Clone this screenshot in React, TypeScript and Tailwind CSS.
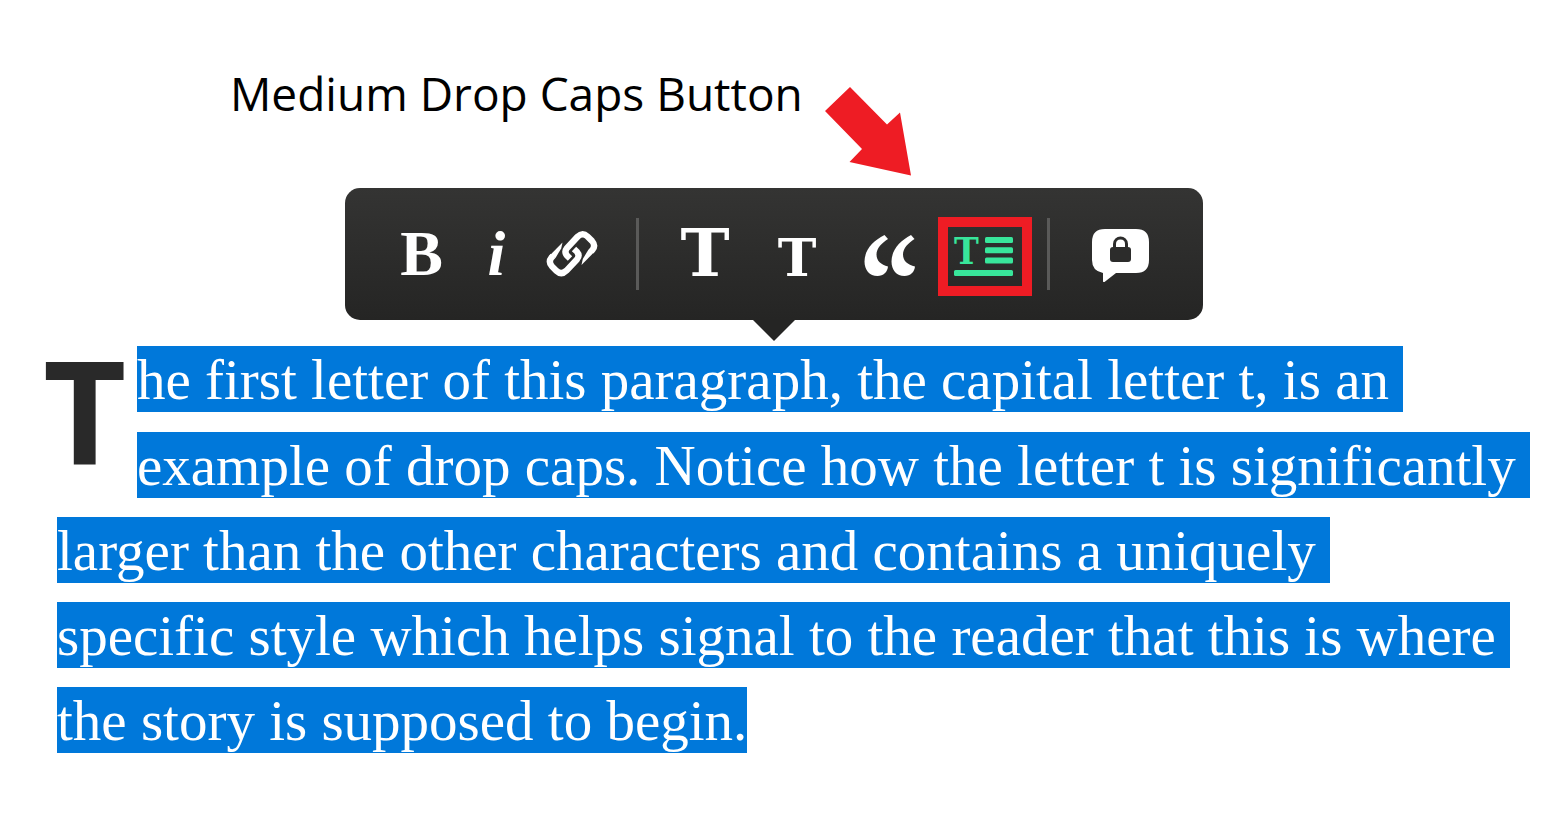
import type { ReactNode } from 'react';

const besideCap = [
  'he first letter of this paragraph, the capital letter t, is an ',
  'example of drop caps. Notice how the letter t is significantly ',
];

const belowCap = [
  'larger than the other characters and contains a uniquely ',
  'specific style which helps signal to the reader that this is where ',
  'the story is supposed to begin.',
];

function Tool({ label, className, children }: { label: string; className: string; children: ReactNode }) {
  return (
    <button type="button" aria-label={label} className={`flex shrink-0 justify-center ${className}`}>
      {children}
    </button>
  );
}

function Divider() {
  return <span className="h-[72px] w-[3px] shrink-0 bg-[#5a5a59]" />;
}

function ChainLink() {
  return (
    <>
      <path
        d="M24 27.500 L21.200 24.800 Q17.800 21 21 17 L31.500 5.800 Q36.500 0.800 41.500 5.500 L46 10 Q50 14.500 46.500 18.800 L45 20.500"
        fill="none"
        stroke="#fff"
        strokeWidth="6.300"
      />
      <path d="M35.500 34 L36.800 28 L42.500 18.500 L48.800 20.500 Z" fill="#fff" />
    </>
  );
}

function LinkIcon() {
  return (
    <svg width="52" height="46" viewBox="0 0 52 46" className="overflow-visible">
      <ChainLink />
      <g transform="rotate(180 26 22.700)">
        <ChainLink />
      </g>
    </svg>
  );
}

function QuoteIcon() {
  return (
    <svg width="51" height="41" viewBox="0 0 51 41" fill="#fff">
      <path d="M20.500 0 L24 4 C18 8 12.500 13 12.500 19.500 C12.500 26 17 29.500 24 31.500 C23.500 37 19.500 41 13.500 41 C5.500 41 0.500 35 0.500 26.500 C0.500 15.500 8.500 6 20.500 0 Z" />
      <path d="M47 0 L50.500 4 C44.500 8 39 13 39 19.500 C39 26 43.500 29.500 51 31.500 C50.500 37 46.500 41 40.500 41 C32.500 41 27.500 35 27.500 26.500 C27.500 15.500 35.500 6 47 0 Z" />
    </svg>
  );
}

function DropCapIcon() {
  return (
    <svg width="62" height="40" viewBox="0 0 62 40" fill="#38e69b" className="overflow-visible">
      <text x="0" y="27" fontSize="37" fontWeight="700" className="font-['DejaVu_Serif_Condensed','DejaVu_Serif',serif]">
        T
      </text>
      <rect x="31" y="0" width="28" height="6" rx="1.500" />
      <rect x="31" y="10.300" width="28" height="6" rx="1.500" />
      <rect x="31" y="20.600" width="28" height="6" rx="1.500" />
      <rect x="0" y="33" width="59" height="6" rx="1.500" />
    </svg>
  );
}

function PrivateNoteIcon() {
  return (
    <svg width="57" height="53" viewBox="0 0 57 53">
      <path
        d="M13 0 H44 Q57 0 57 13 V31 Q57 44 44 44 H24 L12.500 53 Q11 53.500 11 52 V44 Q0 42 0 31 V13 Q0 0 13 0 Z"
        fill="#fff"
      />
      <rect x="18" y="18" width="21" height="15" rx="3" fill="#2c2c2b" />
      <path d="M22.500 20 V15 C22.500 7 34.500 7 34.500 15 V20" fill="none" stroke="#2c2c2b" strokeWidth="3" />
    </svg>
  );
}

function Line({ children }: { children: string }) {
  return (
    <mark className="block h-[66px] w-fit bg-[#0078da] text-[57px] leading-[68px] whitespace-pre text-white">
      {children}
    </mark>
  );
}

export default function App() {
  return (
    <main className="min-h-screen bg-white pb-10">
      <header className="flex items-start gap-[22px] pt-[60px] pl-[230px]">
        <h1 className="font-['Open_Sans','Noto_Sans',sans-serif] text-[46px] leading-[66px] whitespace-nowrap text-black">
          Medium Drop Caps Button
        </h1>
        <svg width="87" height="89" viewBox="0 0 87 89" className="mt-[27px] shrink-0" fill="#ee1c24">
          <path d="M0 24 L25 0 L62 37.500 L75 25.500 L86 88.500 L24.500 75 L37 62 Z" />
        </svg>
      </header>

      <div className="mt-3 flex flex-col items-center pr-[18px]">
        <div
          role="toolbar"
          aria-label="Text formatting"
          className="flex h-[132px] items-center rounded-[15px] bg-linear-to-b from-[#343433] to-[#252524] pr-[54px] pl-[39px] text-white"
        >
          <div className="flex items-center font-['Liberation_Serif',serif] text-[64px] leading-[134px] font-bold">
            <Tool label="Bold" className="w-[75px]">B</Tool>
            <Tool label="Italic" className="w-[75px] italic">i</Tool>
            <Tool label="Link" className="w-[75px]">
              <LinkIcon />
            </Tool>
          </div>
          <div className="ml-[27px] flex">
            <Divider />
          </div>
          <div className="ml-5 flex items-baseline pt-0.5 font-['DejaVu_Serif',serif] leading-[132px] font-bold">
            <Tool label="Large heading" className="w-[92px] text-[66px]">T</Tool>
            <Tool label="Small heading" className="w-[92px] text-[52px]">T</Tool>
            <Tool label="Quote" className="w-[92px]">
              <QuoteIcon />
            </Tool>
          </div>
          <Tool label="Drop cap" className="mt-[5px] ml-[3px] h-[79px] w-[94px] items-center border-[10px] border-[#ee1c24]">
            <DropCapIcon />
          </Tool>
          <div className="ml-[15px] flex">
            <Divider />
          </div>
          <Tool label="Private note" className="mt-[3px] ml-[42px]">
            <PrivateNoteIcon />
          </Tool>
        </div>
        <svg width="42" height="21" viewBox="0 0 42 21" fill="#252524">
          <path d="M0 0 H42 L21 21 Z" />
        </svg>
      </div>

      <p className="mt-[5px] flex flex-col gap-[19px] pl-[57px] font-['Liberation_Serif',serif]">
        <span className="-ml-3.5 flex gap-2">
          <span className="w-[86px] shrink-0 font-['Open_Sans','Noto_Sans',sans-serif] text-[144px] leading-[126px] font-bold text-[#292929]">
            T
          </span>
          <span className="flex flex-col gap-5">
            {besideCap.map((line) => (
              <Line key={line}>{line}</Line>
            ))}
          </span>
        </span>
        {belowCap.map((line) => (
          <Line key={line}>{line}</Line>
        ))}
      </p>
    </main>
  );
}
